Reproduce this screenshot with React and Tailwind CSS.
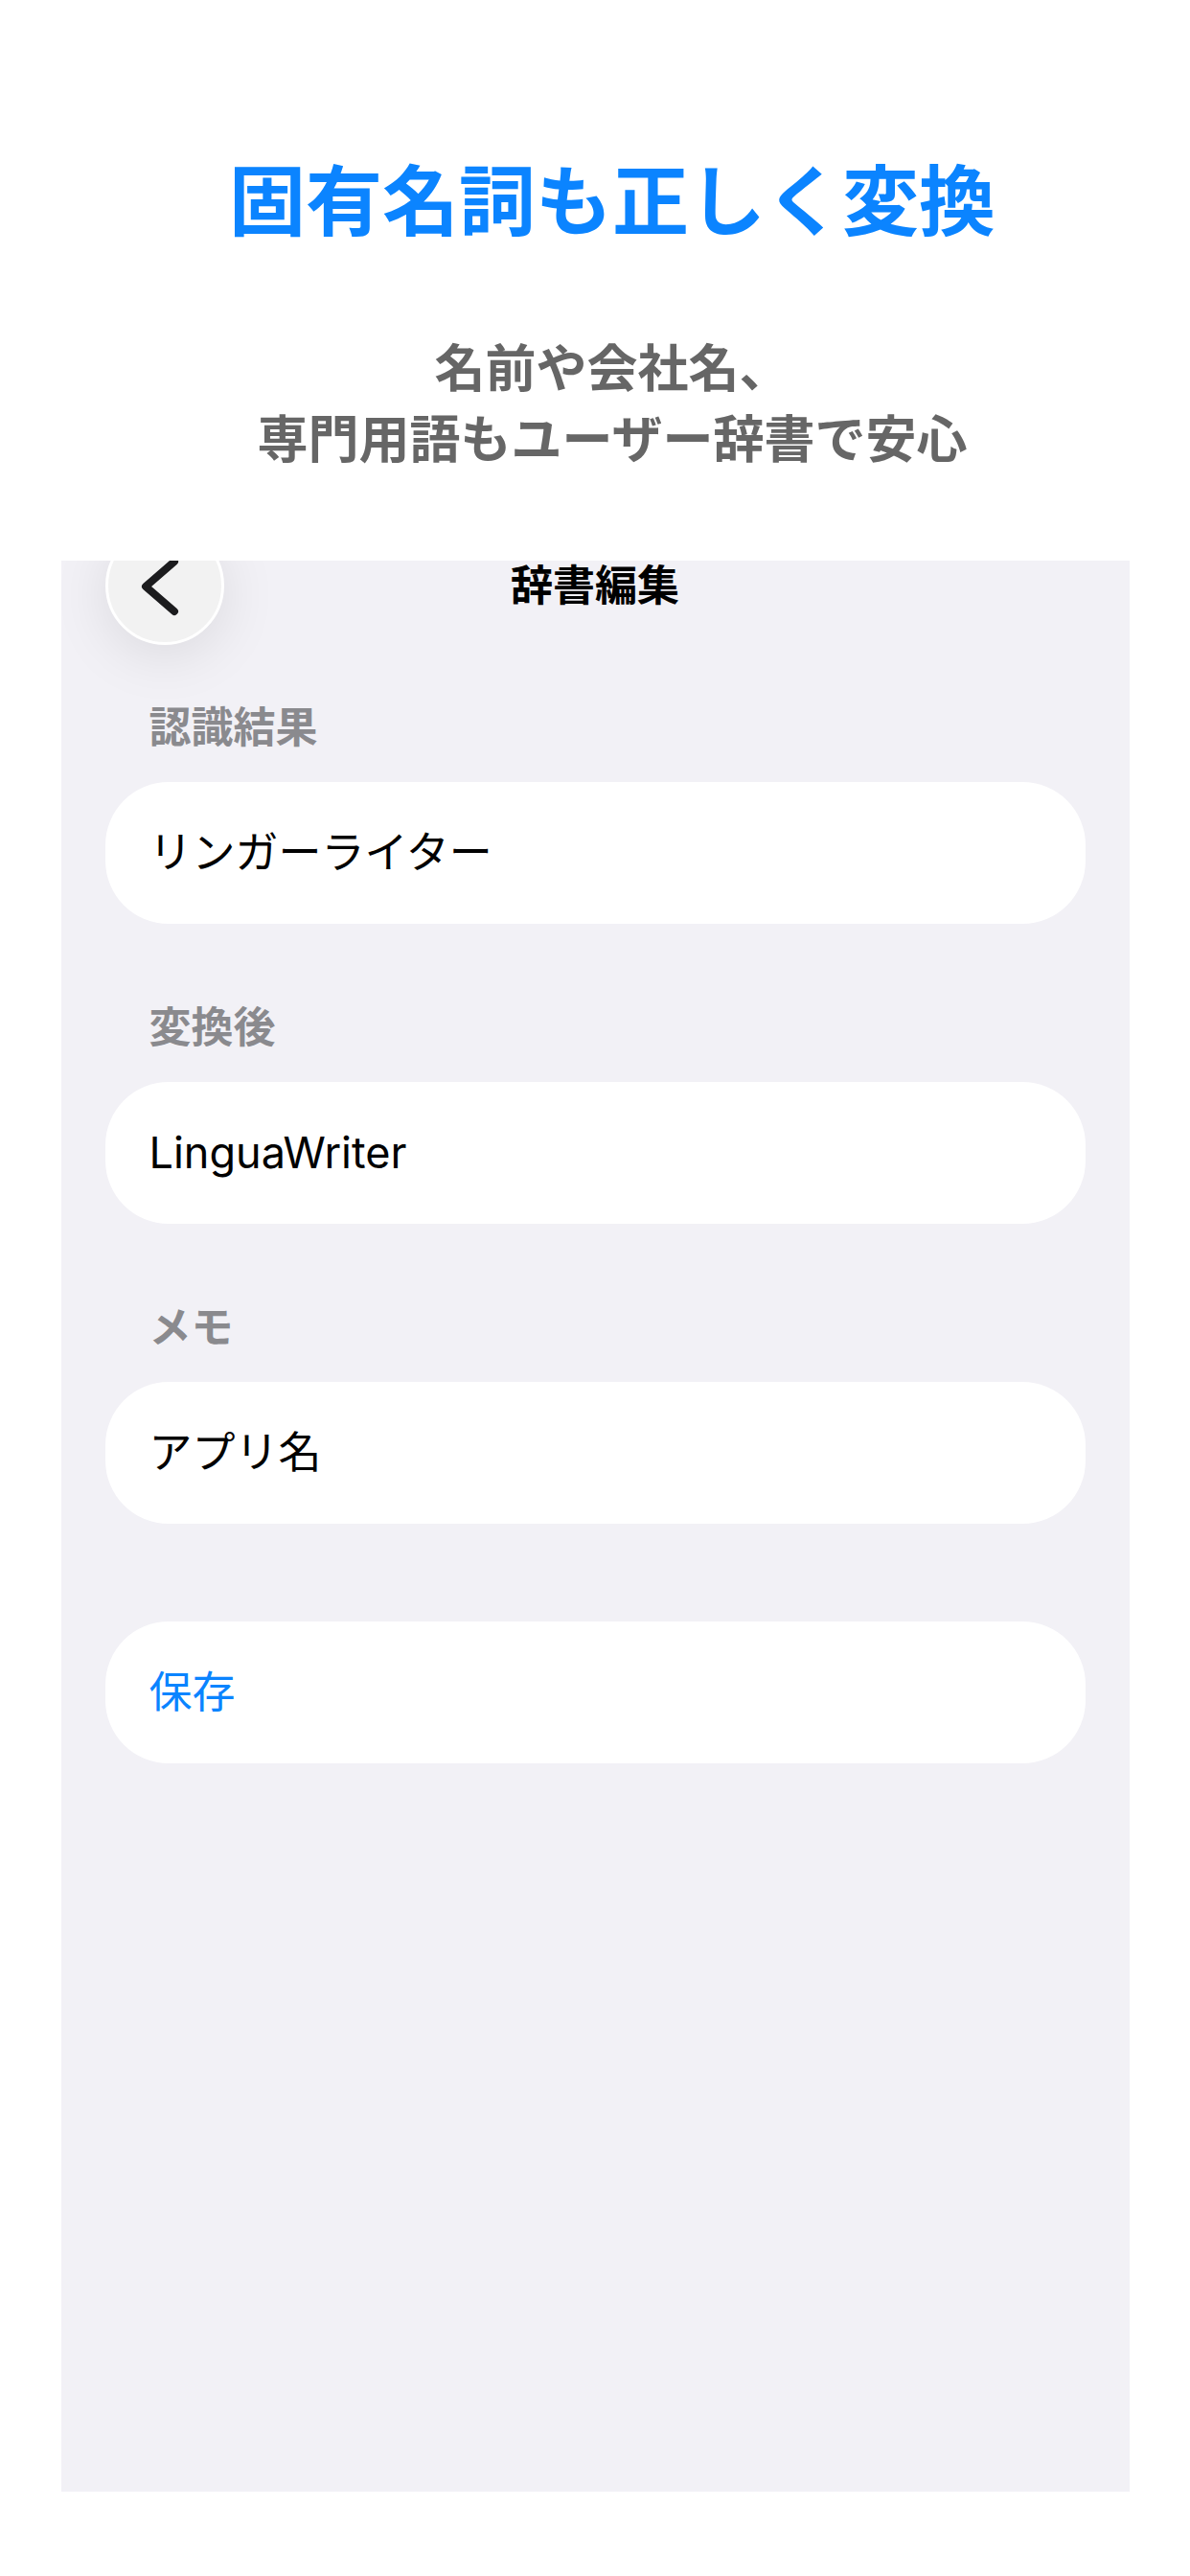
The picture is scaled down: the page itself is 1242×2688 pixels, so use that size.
const fontStack = { fontFamily: 'Inter, "Noto Sans CJK JP", sans-serif' }

const Field = ({ label, value }) => (
  <div className="flex flex-col">
    <div className="px-[46px] mb-[33px] text-[44px] leading-[48px] font-semibold text-[#8a8a8e]">
      {label}
    </div>
    <div className="h-[148px] rounded-[66px] bg-white px-[46px] flex items-center text-[45px] text-black">
      {value}
    </div>
  </div>
)

export default function App() {
  return (
    <div
      className="w-[1242px] h-[2688px] bg-white flex flex-col items-center"
      style={fontStack}
    >
      {/* Headline */}
      <div className="w-full pl-[36px] flex flex-col items-center">
        <h1 className="mt-[162px] text-[80px] leading-[96px] font-bold text-[#0b84ff] whitespace-nowrap">
          固有名詞も正しく変換
        </h1>
        <p className="mt-[90px] text-[53px] leading-[74px] font-bold text-[#666666] text-center">
          名前や会社名、
          <br />
          専門用語もユーザー辞書で安心
        </p>
      </div>

      {/* Phone screen */}
      <div className="mt-[89px] w-[1115px] h-[2015px] bg-[#f2f1f6] overflow-hidden px-[46px] flex flex-col">
        {/* Nav bar */}
        <div className="-mt-[36px] h-[124px] grid grid-cols-[124px_1fr_124px] items-center">
          <div className="w-[124px] h-[124px] rounded-full bg-[#f2f2f2] border-[3px] border-white shadow-[0_10px_60px_rgba(0,0,0,0.10)] flex items-center justify-center">
            <svg width="124" height="124" viewBox="0 0 124 124" className="-m-[3px]">
              <polyline
                points="72,37 42,63 72,89"
                fill="none"
                stroke="#1c1c1e"
                strokeWidth="8"
                strokeLinecap="round"
                strokeLinejoin="round"
              />
            </svg>
          </div>
          <div className="text-center text-[44px] leading-[52px] font-bold text-black">
            辞書編集
          </div>
          <div />
        </div>

        <div className="mt-[62px] flex flex-col gap-[84px]">
          <Field label="認識結果" value="リンガーライター" />
          <Field label="変換後" value="LinguaWriter" />
          <Field label="メモ" value="アプリ名" />
        </div>

        <button className="mt-[102px] h-[148px] rounded-[66px] bg-white px-[46px] flex items-center text-[45px] text-[#0a84ff]">
          保存
        </button>
      </div>
    </div>
  )
}
